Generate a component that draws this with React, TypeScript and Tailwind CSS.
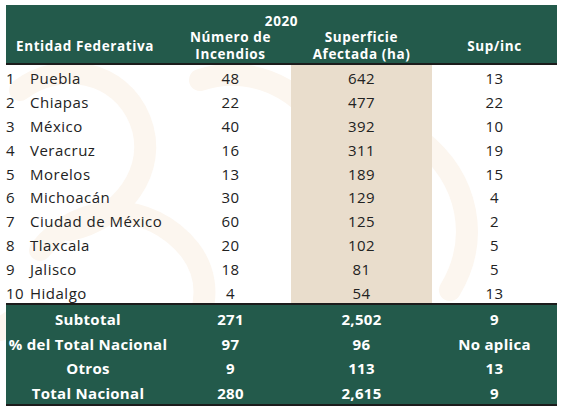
const rows = [
  ["1", "Puebla", "48", "642", "13"],
  ["2", "Chiapas", "22", "477", "22"],
  ["3", "México", "40", "392", "10"],
  ["4", "Veracruz", "16", "311", "19"],
  ["5", "Morelos", "13", "189", "15"],
  ["6", "Michoacán", "30", "129", "4"],
  ["7", "Ciudad de México", "60", "125", "2"],
  ["8", "Tlaxcala", "20", "102", "5"],
  ["9", "Jalisco", "18", "81", "5"],
  ["10", "Hidalgo", "4", "54", "13"],
]

const totals = [
  ["Subtotal", "271", "2,502", "9"],
  ["% del Total Nacional", "97", "96", "No aplica"],
  ["Otros", "9", "113", "13"],
  ["Total Nacional", "280", "2,615", "9"],
]

const cols = "grid grid-cols-[24px_140px_121px_141px_125px]"

export default function App() {
  return (
    <div className="relative h-[412px] w-[564px] overflow-hidden bg-white font-['Open_Sans',sans-serif]">
      {/* faint watermark behind the table */}
      <svg className="absolute left-0 top-0" width="564" height="412" viewBox="0 0 564 412">
        <g fill="none" stroke="#fcf6ef" strokeWidth="22" strokeLinecap="round">
          <path d="M20 90 C 60 60, 120 70, 140 120 C 160 170, 120 220, 70 230" />
          <path d="M40 250 C 80 200, 150 200, 190 250 C 220 290, 200 340, 160 370" />
          <path d="M200 80 C 260 60, 320 100, 330 150" />
          <path d="M420 140 C 470 180, 480 240, 450 290" />
          <path d="M0 330 C 30 300, 80 310, 100 360" />
        </g>
      </svg>

      <div className="relative ml-[6px] mt-[5px] w-[551px]">
        {/* header */}
        <div className="border-b-2 border-[#1c1c1c] bg-[#235a4b] pt-[8px] font-bold tracking-[0.6px] text-white">
          <div className="text-center text-[13.5px] leading-[16px]">2020</div>
          <div className={`${cols} h-[34px] items-center text-[13.5px] leading-[17px]`}>
            <div className="col-span-2 pl-[10px]">Entidad Federativa</div>
            <div className="text-center">
              Número de
              <br />
              Incendios
            </div>
            <div className="text-center">
              Superficie
              <br />
              Afectada (ha)
            </div>
            <div className="text-center">Sup/inc</div>
          </div>
        </div>

        {/* body */}
        <div className="text-[15px] tracking-[0.5px] text-[#222]">
          {rows.map((r) => (
            <div key={r[0]} className={`${cols} h-[23.8px] items-center leading-none`}>
              <div className="pt-[4px]">{r[0]}</div>
              <div className="pt-[4px]">{r[1]}</div>
              <div className="pt-[4px] text-center">{r[2]}</div>
              <div className="flex h-full items-center justify-center bg-[#e9ddcc] pt-[4px]">{r[3]}</div>
              <div className="pt-[4px] text-center">{r[4]}</div>
            </div>
          ))}
        </div>

        {/* totals */}
        <div className="border-y-2 border-[#1c1c1c] bg-[#235a4b] pt-[1px] text-[15px] font-bold tracking-[0.3px] text-white">
          {totals.map((t) => (
            <div key={t[0]} className={`${cols} h-[24.6px] items-center text-center leading-none`}>
              <div className="col-span-2 pt-[3px]">{t[0]}</div>
              <div className="pt-[3px]">{t[1]}</div>
              <div className="pt-[3px]">{t[2]}</div>
              <div className="pt-[3px]">{t[3]}</div>
            </div>
          ))}
        </div>
      </div>
    </div>
  )
}
